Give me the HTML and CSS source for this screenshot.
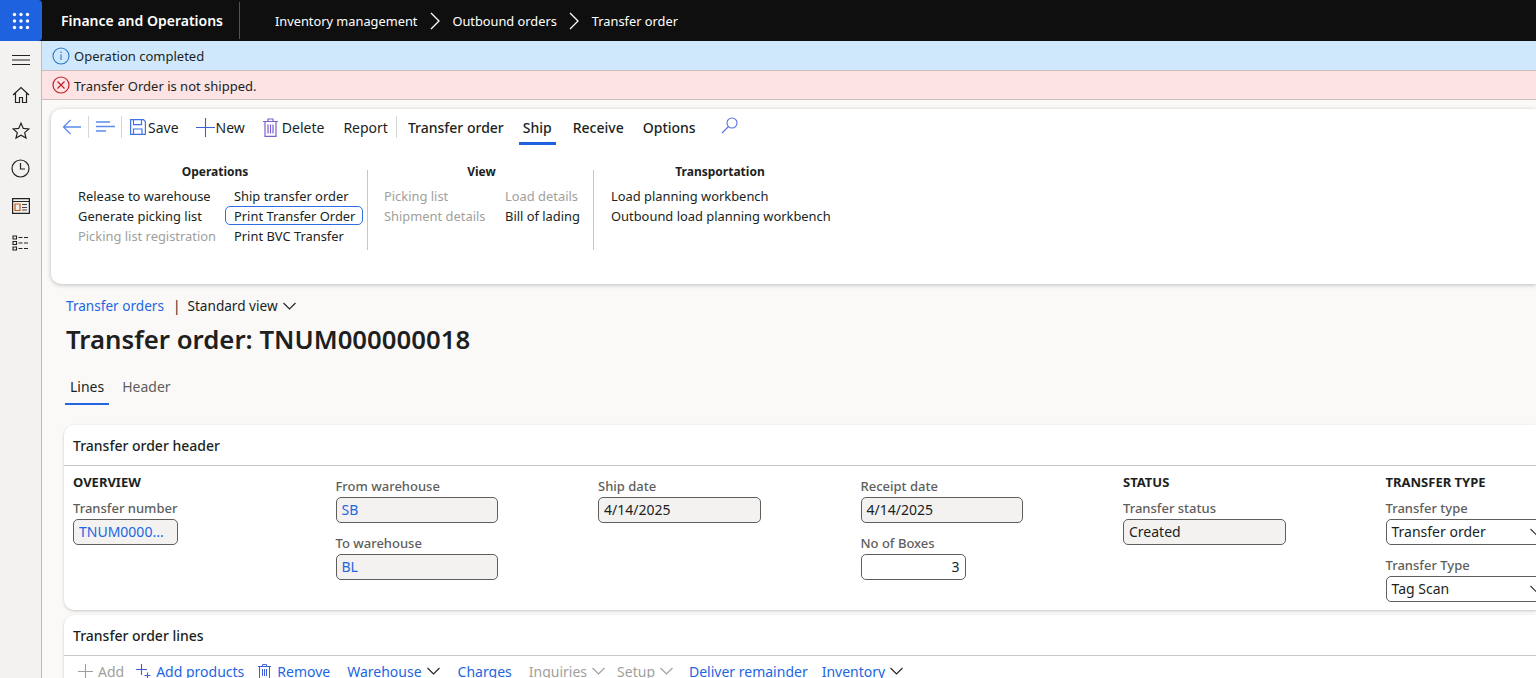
FILE: index.html
```html
<!DOCTYPE html>
<html lang="en">
<head>
  <meta charset="UTF-8" />
  <title>Transfer order - Finance and Operations</title>
  <link rel="stylesheet" href="styles.css">
</head>
<body>

  <header class="topbar">
    <div class="waffle">
      <svg width="18" height="18" viewBox="0 0 18 18" fill="#fff">
        <circle cx="2.5" cy="2.5" r="1.7"/><circle cx="9" cy="2.5" r="1.7"/><circle cx="15.5" cy="2.5" r="1.7"/>
        <circle cx="2.5" cy="9" r="1.7"/><circle cx="9" cy="9" r="1.7"/><circle cx="15.5" cy="9" r="1.7"/>
        <circle cx="2.5" cy="15.5" r="1.7"/><circle cx="9" cy="15.5" r="1.7"/><circle cx="15.5" cy="15.5" r="1.7"/>
      </svg>
    </div>
    <div class="app-name">Finance and Operations</div>
    <nav class="crumbs">
      <span>Inventory management</span>
      <svg width="12" height="18" viewBox="0 0 12 18" fill="none" stroke="#fff" stroke-width="1.3"><path d="M2 1l8 8-8 8"/></svg>
      <span>Outbound orders</span>
      <svg width="12" height="18" viewBox="0 0 12 18" fill="none" stroke="#fff" stroke-width="1.3"><path d="M2 1l8 8-8 8"/></svg>
      <span>Transfer order</span>
    </nav>
  </header>

  <div class="shell">
    <aside class="sidebar">
      <div class="side-slot side-menu"><svg width="20" height="12" viewBox="0 0 20 12" stroke="#222" stroke-width="1"><path d="M1 1.500h18M1 6h18M1 10.500h18"/></svg></div>
      <div class="side-slot"><svg width="18" height="18" viewBox="0 0 18 18" fill="none" stroke="#222" stroke-width="1.2"><path d="M1 9l8-7.500L17 9M3.500 7v9.500h4v-5h3v5h4V7"/></svg></div>
      <div class="side-slot side-star"><svg width="18" height="18" viewBox="0 0 18 18" fill="none" stroke="#222" stroke-width="1.2"><path d="M9 1.200l2.300 5.200 5.600.5-4.200 3.700 1.300 5.500L9 13.200l-5 2.900 1.300-5.500L1.100 6.900l5.600-.5z"/></svg></div>
      <div class="side-slot"><svg width="19" height="19" viewBox="0 0 19 19" fill="none" stroke="#222" stroke-width="1.2"><circle cx="9.500" cy="9.500" r="8.500"/><path d="M9.500 4v6H14"/></svg></div>
      <div class="side-slot"><svg width="18" height="16" viewBox="0 0 18 16" fill="none" stroke="#222" stroke-width="1.200"><path d="M.6.600h16.800v14.800H.6zM.6 3.500h16.800"/><path d="M3 6h5v6.500H3z" stroke="#c55a11"/><path d="M10 6.500h5M10 9.500h5M10 12h5" stroke="#444"/></svg></div>
      <div class="side-slot"><svg width="18" height="16" viewBox="0 0 18 16" fill="none" stroke="#222" stroke-width="1.100"><path d="M1 1h3.500v3H1zM1 6.500h3.500v3H1zM1 12h3.500v3H1z"/><path d="M6.500 2.500H17M6.500 8H17M6.500 13.500H17" stroke-dasharray="4 1.500"/></svg></div>
    </aside>

    <main class="content">
      <div class="msg msg-info">
        <svg width="18" height="18" viewBox="0 0 18 18" fill="none" stroke="#2b78c5" stroke-width="1.100"><circle cx="9" cy="9" r="8"/><path d="M9 7.500V13M9 4.500v1.500"/></svg>
        <span>Operation completed</span>
      </div>
      <div class="msg msg-error">
        <svg width="18" height="18" viewBox="0 0 18 18" fill="none" stroke="#c11f2a" stroke-width="1.200"><circle cx="9" cy="9" r="8"/><path d="M5.500 5.500l7 7M12.500 5.500l-7 7"/></svg>
        <span>Transfer Order is not shipped.</span>
      </div>

      <section class="action-pane">
        <div class="action-bar">
          <svg class="back" width="19" height="16" viewBox="0 0 19 16" fill="none" stroke="#5b8def" stroke-width="1.300"><path d="M8.500 1L1.500 8l7 7M1.500 8H19"/></svg>
          <span class="sep"></span>
          <svg class="lines-icon" width="19" height="12" viewBox="0 0 19 12" stroke="#5b8def" stroke-width="1.300"><path d="M0 1h14M0 5.500h19M0 10h10"/></svg>
          <span class="sep"></span>
          <button class="act act-save">
            <svg width="16" height="16" viewBox="0 0 16 16" fill="none" stroke="#3f73e6" stroke-width="1.200"><path d="M.6.600h12.800l2 2v12.800H.6z"/><path d="M3.500.600v5h8v-5M3.500 15.400V10h8.500v5.400"/></svg>Save
          </button>
          <button class="act act-new">
            <svg width="19" height="19" viewBox="0 0 19 19" stroke="#3f5fd8" stroke-width="1.100"><path d="M9.500 0v19M0 9.500h19"/></svg>New
          </button>
          <button class="act act-delete">
            <svg width="15" height="19" viewBox="0 0 15 19" fill="none" stroke="#7a5fd0" stroke-width="1.200"><path d="M0 3.500h15M5 3V1h5v2M2 3.500v14.900h11V3.500M5 6.500v9M7.500 6.500v9M10 6.500v9"/></svg>Delete
          </button>
          <button class="act act-report">Report</button>
          <span class="sep sep-tabs"></span>
          <button class="tab">Transfer order</button>
          <button class="tab tab-active">Ship</button>
          <button class="tab">Receive</button>
          <button class="tab">Options</button>
          <svg class="search" width="17" height="17" viewBox="0 0 17 17" fill="none" stroke="#5b6fe0" stroke-width="1.100"><circle cx="11" cy="6" r="5"/><path d="M7.500 9.500L1 16"/></svg>
        </div>

        <div class="ribbon">
          <div class="group group-ops">
            <h4>Operations</h4>
            <div class="group-cols">
              <ul class="col-release">
                <li>Release to warehouse</li>
                <li>Generate picking list</li>
                <li class="off">Picking list registration</li>
              </ul>
              <ul>
                <li>Ship transfer order</li>
                <li class="focus">Print Transfer Order</li>
                <li>Print BVC Transfer</li>
              </ul>
            </div>
          </div>
          <span class="divider"></span>
          <div class="group group-view">
            <h4>View</h4>
            <div class="group-cols">
              <ul class="col-picking">
                <li class="off">Picking list</li>
                <li class="off">Shipment details</li>
              </ul>
              <ul>
                <li class="off">Load details</li>
                <li>Bill of lading</li>
              </ul>
            </div>
          </div>
          <span class="divider"></span>
          <div class="group group-trans">
            <h4>Transportation</h4>
            <ul>
              <li>Load planning workbench</li>
              <li>Outbound load planning workbench</li>
            </ul>
          </div>
        </div>
      </section>

      <div class="page-crumb">
        <a class="link">Transfer orders</a>
        <span class="pipe">|</span>
        <span>Standard view</span>
        <svg width="13" height="8" viewBox="0 0 13 8" fill="none" stroke="#222" stroke-width="1.100"><path d="M.5 1l6 6 6-6"/></svg>
      </div>
      <h1 class="page-title">Transfer order: TNUM000000018</h1>

      <div class="page-tabs">
        <span class="page-tab page-tab-active">Lines</span>
        <span class="page-tab">Header</span>
      </div>

      <section class="card card-header">
        <h2 class="card-title">Transfer order header</h2>
        <div class="fields">
          <div class="field-col">
            <h3>OVERVIEW</h3>
            <label>Transfer number</label>
            <div class="input readonly link short">TNUM0000...</div>
          </div>
          <div class="field-col no-head">
            <label>From warehouse</label>
            <div class="input readonly link">SB</div>
            <label>To warehouse</label>
            <div class="input readonly link">BL</div>
          </div>
          <div class="field-col no-head">
            <label>Ship date</label>
            <div class="input readonly">4/14/2025</div>
          </div>
          <div class="field-col no-head">
            <label>Receipt date</label>
            <div class="input readonly">4/14/2025</div>
            <label>No of Boxes</label>
            <div class="input short number">3</div>
          </div>
          <div class="field-col">
            <h3>STATUS</h3>
            <label>Transfer status</label>
            <div class="input readonly">Created</div>
          </div>
          <div class="field-col">
            <h3>TRANSFER TYPE</h3>
            <label>Transfer type</label>
            <div class="input select">Transfer order
              <svg width="13" height="8" viewBox="0 0 13 8" fill="none" stroke="#333" stroke-width="1.100"><path d="M.5 1l6 6 6-6"/></svg>
            </div>
            <label>Transfer Type</label>
            <div class="input select">Tag Scan
              <svg width="13" height="8" viewBox="0 0 13 8" fill="none" stroke="#333" stroke-width="1.100"><path d="M.5 1l6 6 6-6"/></svg>
            </div>
          </div>
        </div>
      </section>

      <section class="card card-lines">
        <h2 class="card-title">Transfer order lines</h2>
        <div class="line-tools">
          <span class="tool off t-add"><svg width="15" height="15" viewBox="0 0 15 15" stroke="#a19f9d" stroke-width="1.100"><path d="M7.500 0v15M0 7.500h15"/></svg>Add</span>
          <span class="tool t-products"><svg width="15" height="15" viewBox="0 0 15 15" stroke="#3f5fd8" stroke-width="1.100"><path d="M5.500 0v11M0 5.500h11M11.500 8.500v6M8.500 11.500h6"/></svg>Add products</span>
          <span class="tool t-remove"><svg width="13" height="15" viewBox="0 0 13 15" fill="none" stroke="#3f5fd8" stroke-width="1"><path d="M0 2.500h13M4.500 2.500V.6h4v1.900M1.500 2.500v12h10v-12M4.500 5v7M6.500 5v7M8.500 5v7"/></svg>Remove</span>
          <span class="tool t-ware">Warehouse<svg width="13" height="8" viewBox="0 0 13 8" fill="none" stroke="#222" stroke-width="1.100"><path d="M.5 1l6 6 6-6"/></svg></span>
          <span class="tool t-charges">Charges</span>
          <span class="tool off t-inq">Inquiries<svg width="13" height="8" viewBox="0 0 13 8" fill="none" stroke="#a19f9d" stroke-width="1.100"><path d="M.5 1l6 6 6-6"/></svg></span>
          <span class="tool off">Setup<svg width="13" height="8" viewBox="0 0 13 8" fill="none" stroke="#a19f9d" stroke-width="1.100"><path d="M.5 1l6 6 6-6"/></svg></span>
          <span class="tool t-deliver">Deliver remainder</span>
          <span class="tool">Inventory<svg width="13" height="8" viewBox="0 0 13 8" fill="none" stroke="#222" stroke-width="1.100"><path d="M.5 1l6 6 6-6"/></svg></span>
        </div>
      </section>
    </main>
  </div>

</body>
</html>
```

FILE: styles.css
```css
html, body {
  margin: 0;
  padding: 0;
  height: 678px;
  overflow: hidden;
  font-family: "Noto Sans", Arial, sans-serif;
  font-size: 13px;
  color: #201f1e;
  background-color: #faf9f8;
}

/* top bar */
.topbar {
  height: 41px;
  background-color: #0f0f0f;
  color: white;
  display: flex;
  align-items: center;
}

.waffle {
  width: 42px;
  height: 41px;
  background-color: #1f62e0;
  border-radius: 0 4px 4px 0;
  display: flex;
  align-items: center;
  justify-content: center;
}

.app-name {
  margin-left: 19px;
  width: 178px;
  height: 37px;
  line-height: 37px;
  font-size: 14px;
  font-weight: 600;
  border-right: 1px solid #555;
  white-space: nowrap;
}

.crumbs {
  margin-left: 35px;
  display: flex;
  align-items: center;
  gap: 11.5px;
  font-size: 12.8px;
}

/* left rail */
.shell {
  display: flex;
  height: 637px;
}

.sidebar {
  width: 41px;
  flex: none;
  background-color: #f3f2f1;
  border-right: 1px solid #bdbbb9;
  padding-top: 2px;
  box-sizing: content-box;
}

.side-slot {
  height: 37px;
  display: flex;
  align-items: center;
  justify-content: center;
}

.side-menu {
  height: 33px;
}

.side-star svg {
  margin-top: -1px;
}

.content {
  flex: 1;
  min-width: 0;
  overflow: hidden;
}

/* messages */
.msg {
  height: 30px;
  display: flex;
  align-items: center;
  gap: 4px;
  padding-left: 10px;
  border-bottom: 1px solid #cdbcbc;
  box-sizing: border-box;
}

.msg-info {
  background-color: #cfe8fc;
}

.msg-error {
  background-color: #fde3e4;
  height: 29px;
}

.msg-error span {
  padding-top: 2px;
}

/* action pane */
.action-pane {
  margin: 9px 0 0 9px;
  height: 175px;
  background-color: white;
  border-radius: 10px 0 0 10px;
  box-shadow: 0 1px 4px rgba(0, 0, 0, 0.25);
}

.action-bar {
  height: 36px;
  display: flex;
  align-items: center;
  padding-left: 11px;
}

.sep {
  width: 1px;
  height: 22px;
  background-color: #d8d6d4;
  margin: 0 7px;
}

.lines-icon {
  margin-right: -1px;
}

.act, .tab {
  background: none;
  border: none;
  padding: 0;
  font: inherit;
  font-size: 14px;
  color: #201f1e;
  display: flex;
  align-items: center;
  white-space: nowrap;
}

.act-save {
  margin-left: 1px;
}

.act-save svg {
  margin-right: 2px;
}

.act-new {
  margin-left: 17px;
}

.act-new svg {
  margin-right: 1px;
}

.act-delete {
  margin-left: 18px;
}

.act-delete svg {
  margin-right: 4px;
}

.act-report {
  margin-left: 19px;
}

.sep-tabs {
  margin: 0 7px 0 8px;
}

.tab {
  font-weight: 500;
  height: 36px;
  padding: 0 4px;
  margin-right: 11px;
}

.tab-active {
  box-shadow: inset 0 -3px 0 #1f62e0;
  margin-right: 13px;
}

.search {
  margin-left: 10px;
  margin-top: -3px;
}

.ribbon {
  display: flex;
  padding-top: 19px;
  font-size: 12.9px;
}

.divider {
  width: 1px;
  height: 80px;
  margin-top: 6px;
  background-color: #c8c6c4;
}

.group h4 {
  margin: 0 0 6px;
  font-size: 12px;
  line-height: 16px;
  font-weight: 700;
  text-align: center;
}

.group ul {
  list-style: none;
  margin: 0;
  padding: 0;
}

.group li {
  height: 20px;
  line-height: 20px;
  white-space: nowrap;
  padding: 0 9px;
  box-sizing: border-box;
}

.group .off {
  color: #a19f9d;
}

.group .focus {
  border: 1px solid #2f6fe4;
  border-radius: 5px;
  height: 19px;
  line-height: 18px;
  padding: 0 8px;
  margin-bottom: 1px;
  width: 138px;
}

.group-cols {
  display: flex;
}

.group-ops {
  width: 298px;
  padding-left: 18px;
}

.group-ops h4 {
  margin-right: 6px;
}

.col-release {
  width: 156px;
}

.group-view {
  width: 218px;
  padding-left: 7px;
}

.col-picking {
  width: 121px;
}

.group-view h4 {
  width: 213px;
}

.group-trans {
  padding-left: 8px;
}

.group-trans h4 {
  width: 236px;
}

/* page head */
.page-crumb {
  margin: 13px 0 0 24px;
  height: 18px;
  line-height: 18px;
  display: flex;
  align-items: center;
  gap: 5px;
  font-size: 13.6px;
}

.link {
  color: #2266e3;
}

.pipe {
  margin: 0 2px 0 4px;
}

.page-title {
  margin: 5px 0 0 24px;
  font-size: 25.75px;
  line-height: 38px;
  font-weight: 600;
}

.page-tabs {
  margin: 17px 0 0 23px;
  display: flex;
  gap: 8px;
  font-size: 14px;
}

.page-tab {
  padding: 0 5px;
  height: 28px;
  line-height: 24px;
  color: #605e5c;
}

.page-tab-active {
  color: #201f1e;
  border-bottom: 2px solid #2266e3;
}

/* cards */
.card {
  margin-left: 22px;
  background-color: white;
  border-radius: 10px 0 0 10px;
  box-shadow: 0 1px 3px rgba(0, 0, 0, 0.2);
}

.card-header {
  margin-top: 20px;
  height: 185px;
}

.card-lines {
  margin-top: 5px;
  height: 70px;
  border-radius: 10px 0 0 0;
}

.card-title {
  margin: 0;
  height: 41px;
  line-height: 41px;
  padding-left: 9px;
  font-size: 14px;
  font-weight: 500;
  border-bottom: 1px solid #c8c6c4;
  box-sizing: border-box;
}

.fields {
  display: grid;
  grid-template-columns: repeat(6, 262.5px);
  padding: 7px 0 0 9px;
}

.field-col h3 {
  margin: 0 0 8px;
  font-size: 13px;
  line-height: 18px;
  font-weight: 700;
}

.field-col.no-head {
  padding-top: 4px;
}

.field-col label {
  display: block;
  line-height: 18px;
  color: #605e5c;
  margin-bottom: 2px;
  font-weight: 500;
}

.input {
  width: 162.5px;
  height: 26px;
  line-height: 24px;
  box-sizing: border-box;
  border: 1px solid #605e5c;
  border-radius: 5px;
  padding: 0 5px;
  margin-bottom: 11px;
  font-size: 14px;
  white-space: nowrap;
  display: flex;
  justify-content: space-between;
  align-items: center;
}

.readonly {
  background-color: #f3f2f1;
}

.short {
  width: 105px;
}

.number {
  justify-content: flex-end;
}

.select svg {
  margin-right: -1px;
}

/* lines toolbar */
.line-tools {
  display: flex;
  align-items: center;
  height: 30px;
  padding-left: 14px;
  gap: 16px;
  font-size: 14px;
  white-space: nowrap;
}

.tool {
  color: #2266e3;
  display: flex;
  align-items: center;
  gap: 5px;
}

.tool.off {
  color: #a19f9d;
}

.t-add {
  margin-right: -4px;
}

.t-products {
  margin-right: -2px;
}

.t-remove {
  gap: 6px;
  margin-right: 1px;
}

.t-ware {
  margin-right: 2px;
}

.t-charges {
  margin-right: 1px;
}

.t-inq {
  margin-right: -4px;
}

.t-deliver {
  margin-right: -2px;
}
```
